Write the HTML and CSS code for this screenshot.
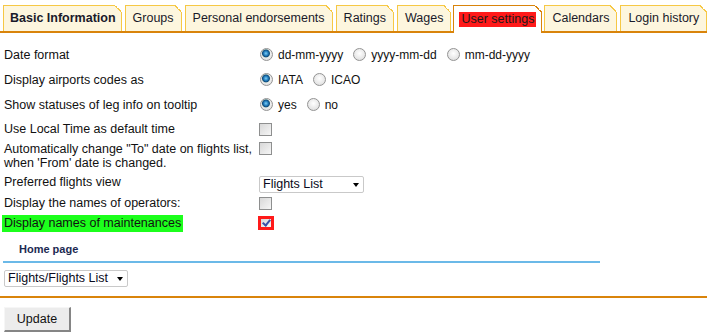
FILE: index.html
```html
<!DOCTYPE HTML>
<html lang="en">
  <head>
    <title>User settings</title>
    <meta charset="utf-8">
    <link rel="stylesheet" href="styles.css">
  </head>
  <body>

    <div id="tabs">
      <span class="tab first">Basic Information</span>
      <span class="tab">Groups</span>
      <span class="tab">Personal endorsements</span>
      <span class="tab">Ratings</span>
      <span class="tab">Wages</span>
      <span class="tab active"><span class="mark">User settings</span></span>
      <span class="tab">Calendars</span>
      <span class="tab">Login history</span>
    </div>

    <div id="settings">
      <div class="row r25">
        <div class="label">Date format</div>
        <div class="field">
          <input type="radio" name="df" checked><span class="opt">dd-mm-yyyy</span>
          <input type="radio" name="df"><span class="opt">yyyy-mm-dd</span>
          <input type="radio" name="df"><span class="opt">mm-dd-yyyy</span>
        </div>
      </div>
      <div class="row r25">
        <div class="label">Display airports codes as</div>
        <div class="field">
          <input type="radio" name="ac" checked><span class="opt">IATA</span>
          <input type="radio" name="ac"><span class="opt">ICAO</span>
        </div>
      </div>
      <div class="row r25">
        <div class="label">Show statuses of leg info on tooltip</div>
        <div class="field">
          <input type="radio" name="st" checked><span class="opt">yes</span>
          <input type="radio" name="st"><span class="opt">no</span>
        </div>
      </div>
      <div class="row r24">
        <div class="label">Use Local Time as default time</div>
        <div class="field"><input type="checkbox"></div>
      </div>
      <div class="row two">
        <div class="label">Automatically change "To" date on flights list,<br>when 'From' date is changed.</div>
        <div class="field"><input type="checkbox"></div>
      </div>
      <div class="row r22">
        <div class="label">Preferred flights view</div>
        <div class="field">
          <span class="select wide">
            <select><option>Flights List</option></select>
          </span>
        </div>
      </div>
      <div class="row r20">
        <div class="label">Display the names of operators:</div>
        <div class="field"><input type="checkbox"></div>
      </div>
      <div class="row r20">
        <div class="label"><span class="changed">Display names of maintenances</span></div>
        <div class="field"><input type="checkbox" class="changed-box" checked></div>
      </div>
    </div>

    <div id="homeTitle">Home page</div>
    <div id="homeSelect">
      <span class="select narrow">
        <select><option>Flights/Flights List</option></select>
      </span>
    </div>

    <div id="footer">
      <button class="btn">Update</button>
    </div>

  </body>
</html>
```

FILE: styles.css
```css
html {
  height: 100%;
}
body {
  margin: 0;
  padding: 0;
  background: #ffffff;
  color: #111111;
  font-family: "Liberation Sans", Arial, sans-serif;
  font-size: 12.5px;
  overflow: hidden;
}

/* tabs */
#tabs {
  display: flex;
  align-items: flex-end;
  gap: 3px;
  padding: 5px 3px 0 3px;
  border-bottom: 2px solid #d9840b;
  white-space: nowrap;
}
.tab {
  position: relative;
  flex: none;
  height: 25px;
  line-height: 25px;
  padding: 0 7px;
  border: 1px solid #f6c845;
  border-bottom: none;
  background: #fdf6de;
  color: #1a1a2a;
}
.tab::after {
  content: '';
  position: absolute;
  top: -1px;
  right: -1px;
  width: 7px;
  height: 7px;
  background: linear-gradient(to top right, transparent calc(50% - 1px), #f6c845 calc(50% - 1px), #f6c845 50%, #ffffff 50%);
}
.tab.first {
  padding: 0 5px 0 6px;
  font-weight: bold;
}
.tab.active {
  height: 27px;
  margin: 0 -1px -2px -1px;
  padding: 0 5px;
  border-color: #d9840b;
  background: #ffffff;
}
.tab.active::after {
  background: linear-gradient(to top right, transparent calc(50% - 1px), #d9840b calc(50% - 1px), #d9840b 50%, #ffffff 50%);
}
.mark {
  display: inline-block;
  line-height: 15px;
  padding: 0 2px;
  margin-top: 6px;
  vertical-align: top;
  background: #ff1a1a;
  color: #1a1a1a;
}

/* rows */
#settings {
  padding: 9px 0 0 4px;
  white-space: nowrap;
}
.row {
  display: flex;
  align-items: center;
}
.r25 { height: 25px; }
.r24 { height: 24px; }
.r22 { height: 22px; }
.r20 { height: 20px; }
.row.two {
  align-items: flex-start;
  padding: 1px 0;
  line-height: 14px;
}
.label {
  width: 255px;
  flex: none;
}
.field {
  display: flex;
  align-items: center;
}
.changed {
  display: inline-block;
  margin-left: -2px;
  padding: 0 2px;
  line-height: 17px;
  background: #1cff1c;
}
.opt {
  margin: 0 9px 0 5px;
  font-size: 12px;
}

input[type=radio] {
  -webkit-appearance: none;
  appearance: none;
  margin: 0 0 0 1px;
  width: 13px;
  height: 13px;
  border-radius: 50%;
  border: 1px solid #939393;
  background: radial-gradient(circle at 50% 40%, #ffffff 0, #e4e4e4 70%, #cfcfcf 100%);
}
input[type=radio]:checked {
  background: radial-gradient(circle at 45% 40%, #7fd0f5 0, #2a86c4 2px, #0e4a80 3.5px, #8aa 4px, transparent 4.5px),
              radial-gradient(circle at 50% 40%, #ffffff 0, #e4e4e4 70%, #cfcfcf 100%);
}

input[type=checkbox] {
  -webkit-appearance: none;
  appearance: none;
  position: relative;
  margin: 0;
  width: 13px;
  height: 13px;
  border: 1px solid #8e8f8f;
  background: linear-gradient(135deg, #d8d8d8, #f6f6f6);
}
input.changed-box {
  width: 16px;
  height: 14px;
  margin-left: -1px;
  border: 3px solid #ff1a1a;
  background: linear-gradient(135deg, #d8d8d8, #f6f6f6);
}
input.changed-box:checked::after {
  content: '';
  position: absolute;
  left: 3px;
  top: -1px;
  width: 3px;
  height: 6px;
  border-right: 2px solid #3a4fa8;
  border-bottom: 2px solid #3a4fa8;
  transform: rotate(40deg);
}

/* selects */
.select {
  position: relative;
  display: inline-block;
}
.select select {
  -webkit-appearance: none;
  appearance: none;
  display: block;
  height: 17px;
  padding: 0 0 0 3px;
  margin: 0;
  border: 1px solid #c9c9c9;
  border-radius: 2px;
  background: #ffffff;
  color: #0a0a20;
  font: 12.5px "Liberation Sans", Arial, sans-serif;
  line-height: 15px;
}
.select::after {
  content: '';
  position: absolute;
  right: 5px;
  top: 7px;
  border-left: 3.5px solid transparent;
  border-right: 3.5px solid transparent;
  border-top: 4px solid #000000;
}
.select.wide select {
  width: 105px;
}
.select.narrow select {
  width: 124px;
}
.row.r22 .field {
  margin-top: 4px;
}

/* home page */
#homeTitle {
  width: 581px;
  margin: 0 0 0 3px;
  padding: 9px 0 5px 16px;
  line-height: 14px;
  font-size: 11px;
  font-weight: bold;
  color: #1c2a52;
  border-bottom: 2px solid #6bb9e8;
}
#homeSelect {
  padding: 7px 0 9px 4px;
  border-bottom: 2px solid #d9840b;
}

#footer {
  padding: 9px 0 0 4px;
}
.btn {
  width: 67px;
  height: 25px;
  padding: 0;
  margin: 0;
  font: 12.5px "Liberation Sans", Arial, sans-serif;
  color: #111111;
  background: #ececec;
  border-style: solid;
  border-width: 1px 2px 2px 1px;
  border-color: #f6f6f6 #858585 #858585 #f6f6f6;
}
```
